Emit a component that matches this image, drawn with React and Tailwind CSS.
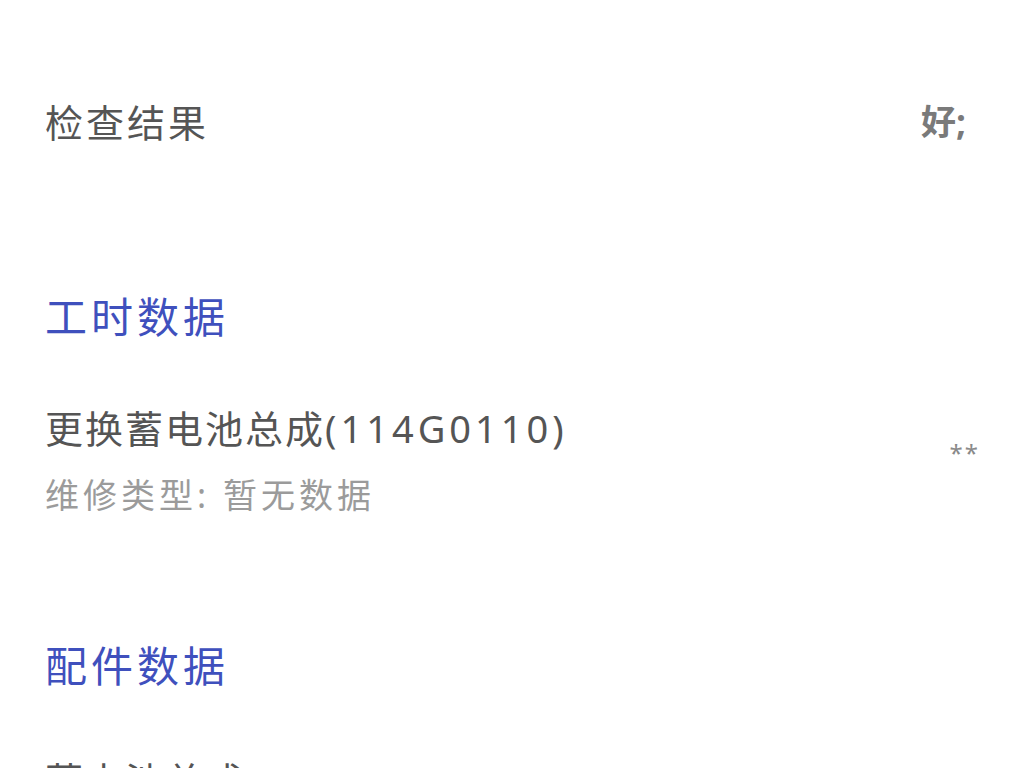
import React from 'react'

const font = { fontFamily: '"Noto Sans", "Noto Sans CJK SC", sans-serif' }

const SectionTitle = ({ children, className = '' }) => (
    <h2 className={`text-[42px] leading-[50px] tracking-[4px] text-[#3f50bd] font-normal ${className}`}>{children}</h2>
)

const LaborItem = ({ name, code, type, price, className = '' }) => (
    <div className={`flex items-center justify-between ${className}`}>
        <div className="flex flex-col">
            <span className="text-[38px] leading-[48px] tracking-[2px] text-[#555555]">
                {name}<span className="tracking-[4px]">({code})</span>
            </span>
            <span className="mt-[23px] text-[34px] leading-[40px] tracking-[4px] text-[#9b9b9b]">维修类型: {type}</span>
        </div>
        <span className="text-[24px] leading-[30px] tracking-[2px] text-[#8a8a8a] mb-[14px]">{price}</span>
    </div>
)

const App = () => {
    return (
        <div className="w-[1024px] h-[768px] overflow-hidden bg-white" style={font}>
            <div className="px-[45px] pr-[44px] pt-[98px] flex flex-col">
                <div className="flex items-center justify-between">
                    <span className="text-[38px] leading-[48px] tracking-[3px] text-[#555555]">检查结果</span>
                    <span className="text-[35px] leading-[48px] font-bold text-[#7a7a7a] mr-[14px]">好;</span>
                </div>

                <SectionTitle className="mt-[146px]">工时数据</SectionTitle>
                <LaborItem className="mt-[62px]" name="更换蓄电池总成" code="114G0110" type="暂无数据" price="**" />

                <SectionTitle className="mt-[126px]">配件数据</SectionTitle>
                <div className="mt-[65px]">
                    <span className="text-[38px] leading-[48px] tracking-[2px] text-[#555555]">蓄电池总成</span>
                </div>
            </div>
        </div>
    )
}

export default App
